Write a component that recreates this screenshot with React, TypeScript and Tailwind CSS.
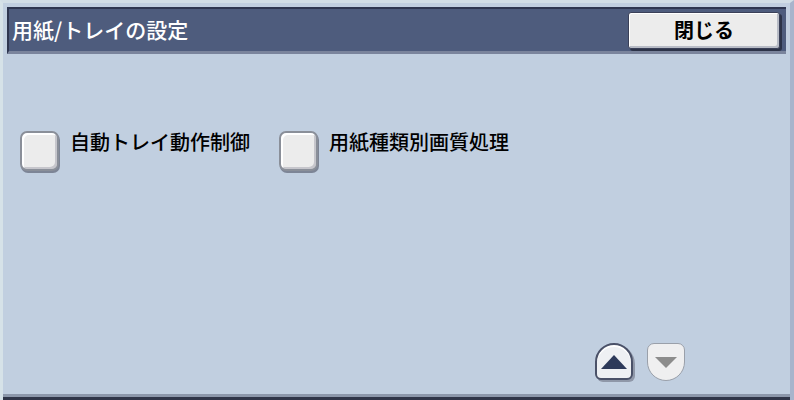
import { ReactNode } from 'react'

function CheckItem({ label }: { label: string }) {
  return (
    <div className="flex items-center gap-[11px]">
      <div className="w-[39px] h-[40px] rounded-[7px] border-2 border-[#8a8f99] bg-[#ececec] shadow-[1px_2px_0_#7d8596,inset_2px_2px_0_#ffffff,inset_-2px_-2px_0_#c6c6cc]" />
      <span className="text-[20px] leading-none text-black font-medium pb-[18px]">{label}</span>
    </div>
  )
}

function ScrollButton({ children, active }: { children: ReactNode; active?: boolean }) {
  return (
    <div
      className={
        active
          ? 'w-[38px] h-[37px] rounded-t-[19px] rounded-b-[6px] border-2 border-[#4a5168] bg-[#eef0f3] flex items-center justify-center shadow-[2px_2px_0_#8f97a8,inset_0_2px_0_#ffffff]'
          : 'w-[38px] h-[38px] rounded-t-[7px] rounded-b-[19px] border border-[#9aa0aa] bg-[#efeff0] flex items-center justify-center'
      }
    >
      {children}
    </div>
  )
}

export default function App() {
  return (
    <div
      className="w-[794px] h-[400px] bg-[#c1cfe0] flex flex-col border-l-[3px] border-t-[3px] border-r-[4px] border-l-[#d6e2e8] border-t-[#d2dee6] border-r-[#a8b4cc] overflow-hidden"
      style={{ fontFamily: '"Noto Sans CJK JP", "Noto Sans", sans-serif' }}
    >
      <div className="mx-[4px] mt-[4px] h-[47px] bg-[#4e5c7d] border-t-2 border-l-2 border-[#2e3650] border-b-[3px] border-b-[#7a849c] flex items-center justify-between pl-[3px] pr-[6px]">
        <span className="text-white text-[21px] font-medium leading-none pb-[2px]">用紙/トレイの設定</span>
        <div className="w-[152px] h-[37px] rounded-[3px] bg-[#ececec] border border-[#3a4058] shadow-[2px_2px_0_#2c3348,inset_1px_1px_0_#ffffff,inset_-2px_-2px_0_#b8bcc6] flex items-center justify-center">
          <span className="text-black text-[20px] font-bold leading-none">閉じる</span>
        </div>
      </div>

      <div className="flex-1 flex flex-col px-[17px]">
        <div className="flex gap-[29px] mt-[77px]">
          <CheckItem label="自動トレイ動作制御" />
          <CheckItem label="用紙種類別画質処理" />
        </div>
        <div className="flex-1" />
        <div className="flex gap-[14px] pl-[575px] mb-[13px]">
          <ScrollButton active>
            <svg width="26" height="14" viewBox="0 0 26 14">
              <polygon points="13,0 26,14 0,14" fill="#2d3a5a" />
            </svg>
          </ScrollButton>
          <ScrollButton>
            <svg width="22" height="11" viewBox="0 0 22 11">
              <polygon points="0,0 22,0 11,11" fill="#8c8c8c" />
            </svg>
          </ScrollButton>
        </div>
      </div>
      <div className="h-[3px] bg-[#8c97aa]" />
      <div className="h-[3px] bg-[#2f3548]" />
    </div>
  )
}
